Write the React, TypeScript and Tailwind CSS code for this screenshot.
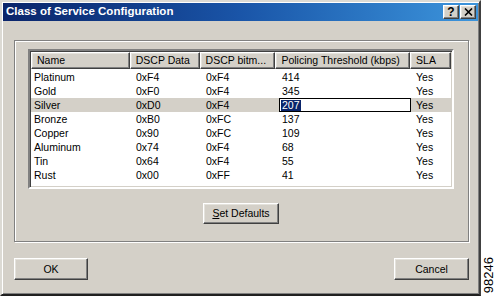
import React from 'react';

const rows = [
  { name: 'Platinum', data: '0xF4', mask: '0xF4', policing: '414', sla: 'Yes' },
  { name: 'Gold', data: '0xF0', mask: '0xF4', policing: '345', sla: 'Yes' },
  { name: 'Silver', data: '0xD0', mask: '0xF4', policing: '207', sla: 'Yes' },
  { name: 'Bronze', data: '0xB0', mask: '0xFC', policing: '137', sla: 'Yes' },
  { name: 'Copper', data: '0x90', mask: '0xFC', policing: '109', sla: 'Yes' },
  { name: 'Aluminum', data: '0x74', mask: '0xF4', policing: '68', sla: 'Yes' },
  { name: 'Tin', data: '0x64', mask: '0xF4', policing: '55', sla: 'Yes' },
  { name: 'Rust', data: '0x00', mask: '0xFF', policing: '41', sla: 'Yes' },
];

const raised =
  'border border-t-white border-l-white border-r-[#404040] border-b-[#404040] shadow-[inset_-1px_-1px_0_#808080,inset_1px_1px_0_#e4e2dc]';

function HeaderCell({ label, className }: { label: string; className: string }) {
  return (
    <div className={`${className} h-[17px] flex items-center pl-[5px] bg-[#d4d0c8] ${raised} leading-none`}>
      {label}
    </div>
  );
}

export default function App() {
  return (
    <div className="w-[495px] h-[296px] bg-white flex font-['Liberation_Sans',Arial,sans-serif] text-[10.5px] text-black overflow-hidden">
      {/* dialog window */}
      <div className="w-[481px] h-[296px] bg-[#d4d0c8] border-2 border-t-[#dcdad4] border-l-[#dcdad4] border-r-[#404040] border-b-[#202020] shadow-[inset_1px_1px_0_#fff,inset_-1px_-1px_0_#808080] p-px flex flex-col">
        <div className="h-[18px] flex items-center justify-between bg-gradient-to-r from-[#0a246a] via-[#1a55a8] to-[#3d95dc] pl-[3px] pr-[2px]">
          <span className="text-white font-bold text-[11.5px] leading-none">Class of Service Configuration</span>
          <div className="flex gap-[1px]">
            <div className={`w-[16px] h-[14px] bg-[#d4d0c8] ${raised} flex items-center justify-center font-bold text-[12px] leading-none`}>?</div>
            <div className={`w-[16px] h-[14px] bg-[#d4d0c8] ${raised} flex items-center justify-center`}>
              <svg width="9" height="8" viewBox="0 0 9 8">
                <path d="M1 0.5 L8 7.5 M8 0.5 L1 7.5" stroke="#000" strokeWidth="1.6" />
              </svg>
            </div>
          </div>
        </div>

        {/* group box */}
        <div className="mt-[19px] ml-[11px] mr-[9px] border border-[#808080] shadow-[inset_1px_1px_0_#fff,1px_1px_0_#fff] pt-[8px] pl-[13px] pr-[14px] pb-[17px] flex flex-col">
          <div className="h-[140px] bg-white border-2 border-t-[#808080] border-l-[#808080] border-r-white border-b-white shadow-[inset_1px_1px_0_#404040,inset_-1px_-1px_0_#d4d0c8] p-px">
            <div className="flex bg-[#d4d0c8]">
              <HeaderCell label="Name" className="w-[99px]" />
              <HeaderCell label="DSCP Data" className="w-[70px]" />
              <HeaderCell label="DSCP bitm..." className="w-[76px]" />
              <HeaderCell label="Policing Threshold (kbps)" className="w-[135px]" />
              <HeaderCell label="SLA" className="w-[41px]" />
            </div>
            <div className="pt-px">
              {rows.map((r) => {
                const selected = r.name === 'Silver';
                return (
                  <div key={r.name} className={`flex h-[14px] items-center leading-none w-[421px] ${selected ? 'bg-[#d4d0c8]' : ''}`}>
                    <div className="w-[99px] pl-[3px]">{r.name}</div>
                    <div className="w-[70px] pl-[6px]">{r.data}</div>
                    <div className="w-[76px] pl-[6px]">{r.mask}</div>
                    <div className="w-[135px] h-[14px] flex items-center">
                      {selected ? (
                        <div className="w-[133px] h-[14px] ml-[3px] bg-white border border-black flex items-center pl-px">
                          <span className="bg-[#0a246a] text-white px-px h-[11px] flex items-center">{r.policing}</span>
                        </div>
                      ) : (
                        <span className="pl-[6px]">{r.policing}</span>
                      )}
                    </div>
                    <div className="w-[41px] pl-[5px]">{r.sla}</div>
                  </div>
                );
              })}
            </div>
          </div>
          <div className="mt-[14px] flex justify-center">
            <button className={`w-[76px] h-[21px] bg-[#d4d0c8] ${raised} leading-none`}>
              <span className="underline">S</span>et Defaults
            </button>
          </div>
        </div>

        <div className="mt-[16px] ml-[11px] mr-[9px] flex justify-between">
          <button className={`w-[74px] h-[22px] bg-[#d4d0c8] ${raised} leading-none`}>OK</button>
          <button className={`w-[75px] h-[22px] bg-[#d4d0c8] ${raised} leading-none`}>Cancel</button>
        </div>
      </div>

      {/* figure number */}
      <div className="flex-1 flex items-end justify-center pb-[3px]">
        <span className="[writing-mode:vertical-rl] rotate-180 text-[13px] leading-none">98246</span>
      </div>
    </div>
  );
}
